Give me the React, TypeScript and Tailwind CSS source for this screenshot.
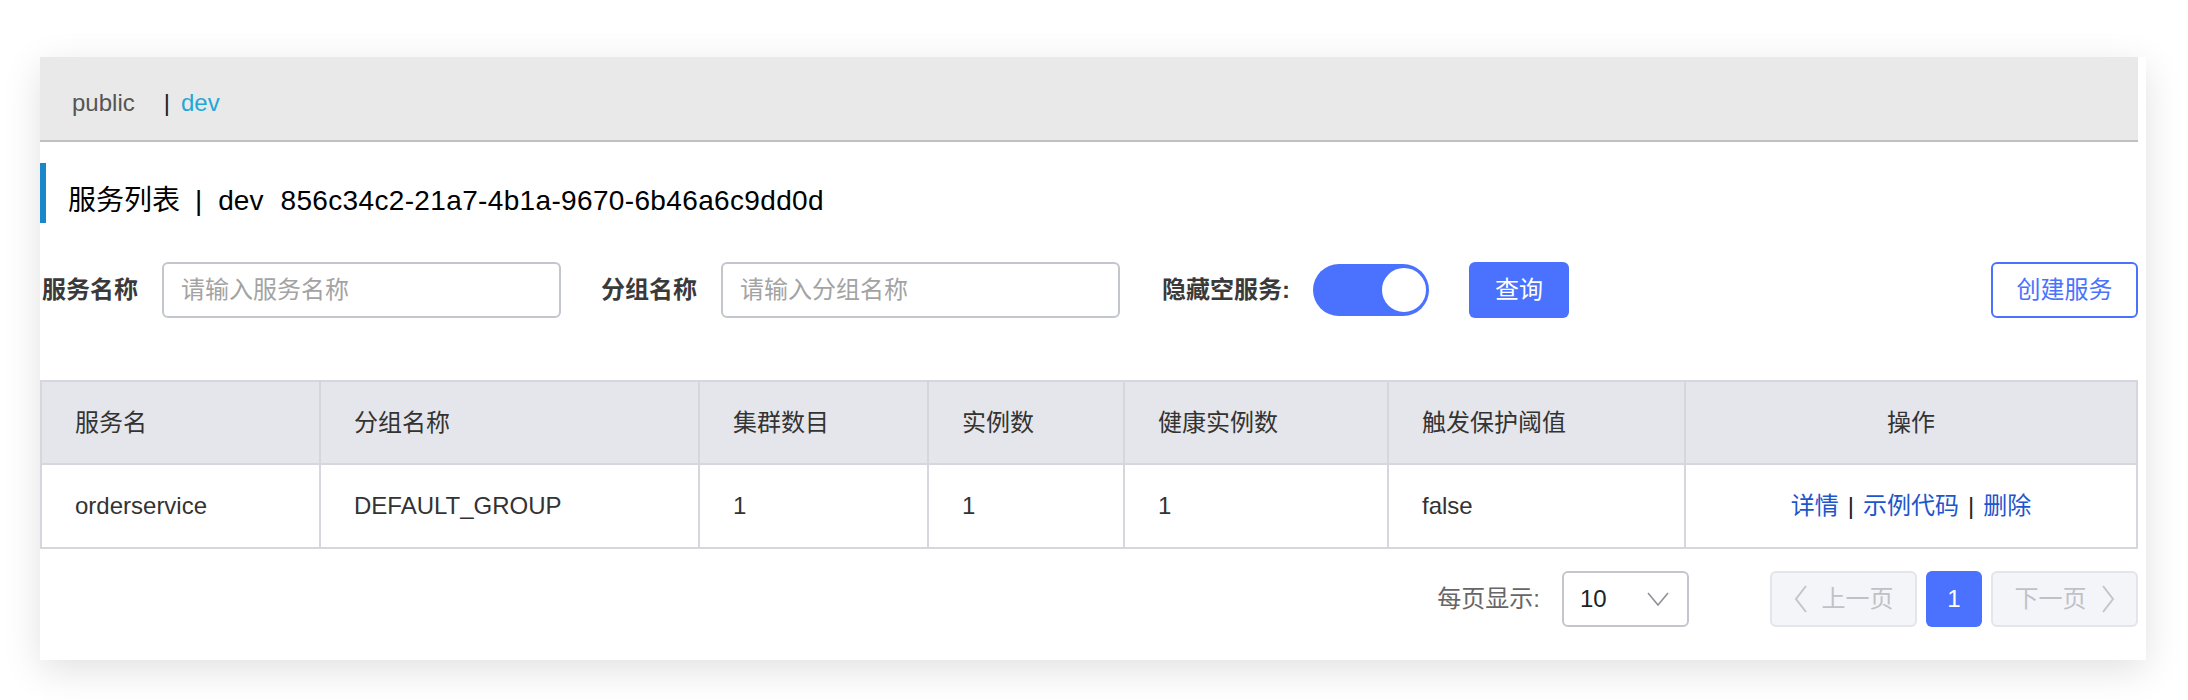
import React from "react";

const FONT = { fontFamily: '"Liberation Sans", "Noto Sans CJK SC", sans-serif' };

function Chevron({ dir }: { dir: "left" | "right" }) {
  return (
    <svg width="14" height="30" viewBox="0 0 14 30" fill="none">
      {dir === "left" ? (
        <polyline points="12,2 2,15 12,28" stroke="#c3c5cb" strokeWidth="2" strokeLinejoin="miter" />
      ) : (
        <polyline points="2,2 12,15 2,28" stroke="#c3c5cb" strokeWidth="2" strokeLinejoin="miter" />
      )}
    </svg>
  );
}

const cols = ["服务名", "分组名称", "集群数目", "实例数", "健康实例数", "触发保护阈值", "操作"];
const row = ["orderservice", "DEFAULT_GROUP", "1", "1", "1", "false"];

export default function App() {
  return (
    <div className="min-h-[700px] bg-white pt-[40px] pl-[40px] pr-[42px] text-[24px] text-[#333]" style={FONT}>
      <div className="bg-white pr-[8px] pb-[33px] shadow-[0_10px_36px_rgba(0,0,0,0.12)]">
        {/* namespace tabs */}
        <div className="mt-[17px] flex h-[85px] items-center border-b-2 border-[#c0c0c0] bg-[#e9e9e9] pl-[32px] pt-[8px]">
          <span className="text-[#555]">public</span>
          <span className="ml-[29px] text-[#222]">|</span>
          <span className="ml-[11px] text-[#22a8d6]">dev</span>
        </div>

        {/* title */}
        <div className="mt-[21px] flex h-[60px] items-center border-l-[6px] border-[#1a88c8] pl-[22px] pt-[15px] text-[28px] text-black">
          <span>服务列表</span>
          <span className="ml-[15px]">|</span>
          <span className="ml-[16px]">dev</span>
          <span className="ml-[17px] tracking-[0.35px]">856c34c2-21a7-4b1a-9670-6b46a6c9dd0d</span>
        </div>

        {/* filters */}
        <div className="mt-[39px] flex h-[56px] items-center">
          <span className="ml-[2px] mr-[24px] font-bold text-[#3a3a3a]">服务名称</span>
          <div className="flex h-[56px] w-[399px] items-center rounded-[6px] border-2 border-[#c4c6ce] pl-[17px] text-[#a3a3a3]">
            请输入服务名称
          </div>
          <span className="ml-[40px] mr-[24px] font-bold text-[#3a3a3a]">分组名称</span>
          <div className="flex h-[56px] w-[399px] items-center rounded-[6px] border-2 border-[#c4c6ce] pl-[17px] text-[#a3a3a3]">
            请输入分组名称
          </div>
          <span className="ml-[42px] mr-[23px] font-bold text-[#3a3a3a]">隐藏空服务:</span>
          <div className="relative h-[52px] w-[116px] rounded-full bg-[#4a72ff]">
            <div className="absolute right-[1px] top-[2px] h-[48px] w-[48px] rounded-full border-2 border-[#4a72ff] bg-white" />
          </div>
          <button className="ml-[40px] flex h-[56px] w-[100px] items-center justify-center rounded-[6px] bg-[#4a72ff] text-white">
            查询
          </button>
          <button className="ml-auto flex h-[56px] w-[147px] items-center justify-center rounded-[6px] border-2 border-[#4a72ff] bg-white text-[#4a72ff]">
            创建服务
          </button>
        </div>

        {/* table */}
        <div className="mt-[62px] border-2 border-[#d5d7dd]">
          <div className="grid grid-cols-[279px_379px_229px_196px_264px_297px_1fr] bg-[#e5e6eb]">
            {cols.map((c, i) => (
              <div
                key={c}
                className={
                  i === 6
                    ? "flex h-[83px] items-center justify-center border-b-2 border-[#d5d7dd]"
                    : "flex h-[83px] items-center border-b-2 border-r-2 border-[#d5d7dd] pl-[33px]"
                }
              >
                {c}
              </div>
            ))}
          </div>
          <div className="grid grid-cols-[279px_379px_229px_196px_264px_297px_1fr] bg-white">
            {row.map((c, i) => (
              <div key={i} className="flex h-[82px] items-center border-r-2 border-[#d5d7dd] pl-[33px]">
                {c}
              </div>
            ))}
            <div className="flex h-[82px] items-center justify-center">
              <span className="text-[#1c56cc]">详情</span>
              <span className="mx-[9px] text-[#222]">|</span>
              <span className="text-[#1c56cc]">示例代码</span>
              <span className="mx-[9px] text-[#222]">|</span>
              <span className="text-[#1c56cc]">删除</span>
            </div>
          </div>
        </div>

        {/* pagination */}
        <div className="mt-[22px] flex h-[56px] items-center justify-end">
          <span className="mr-[22px] text-[#666]">每页显示:</span>
          <div className="flex h-[56px] w-[127px] items-center justify-between rounded-[6px] border-2 border-[#c4c6ce] pl-[16px] pr-[18px] text-[#222]">
            <span>10</span>
            <svg width="22" height="14" viewBox="0 0 22 14" fill="none">
              <polyline points="1,1 11,13 21,1" stroke="#8f9196" strokeWidth="1.6" />
            </svg>
          </div>
          <div className="ml-[81px] flex h-[56px] w-[147px] items-center justify-center gap-[14px] rounded-[6px] border-2 border-[#e3e5ea] bg-[#f4f5f9] text-[#bfc1c7]">
            <Chevron dir="left" />
            <span>上一页</span>
          </div>
          <div className="ml-[9px] flex h-[56px] w-[56px] items-center justify-center rounded-[6px] bg-[#4a72ff] text-white">
            1
          </div>
          <div className="ml-[9px] flex h-[56px] w-[147px] items-center justify-center gap-[14px] rounded-[6px] border-2 border-[#e3e5ea] bg-[#f4f5f9] text-[#bfc1c7]">
            <span>下一页</span>
            <Chevron dir="right" />
          </div>
        </div>
      </div>
    </div>
  );
}
